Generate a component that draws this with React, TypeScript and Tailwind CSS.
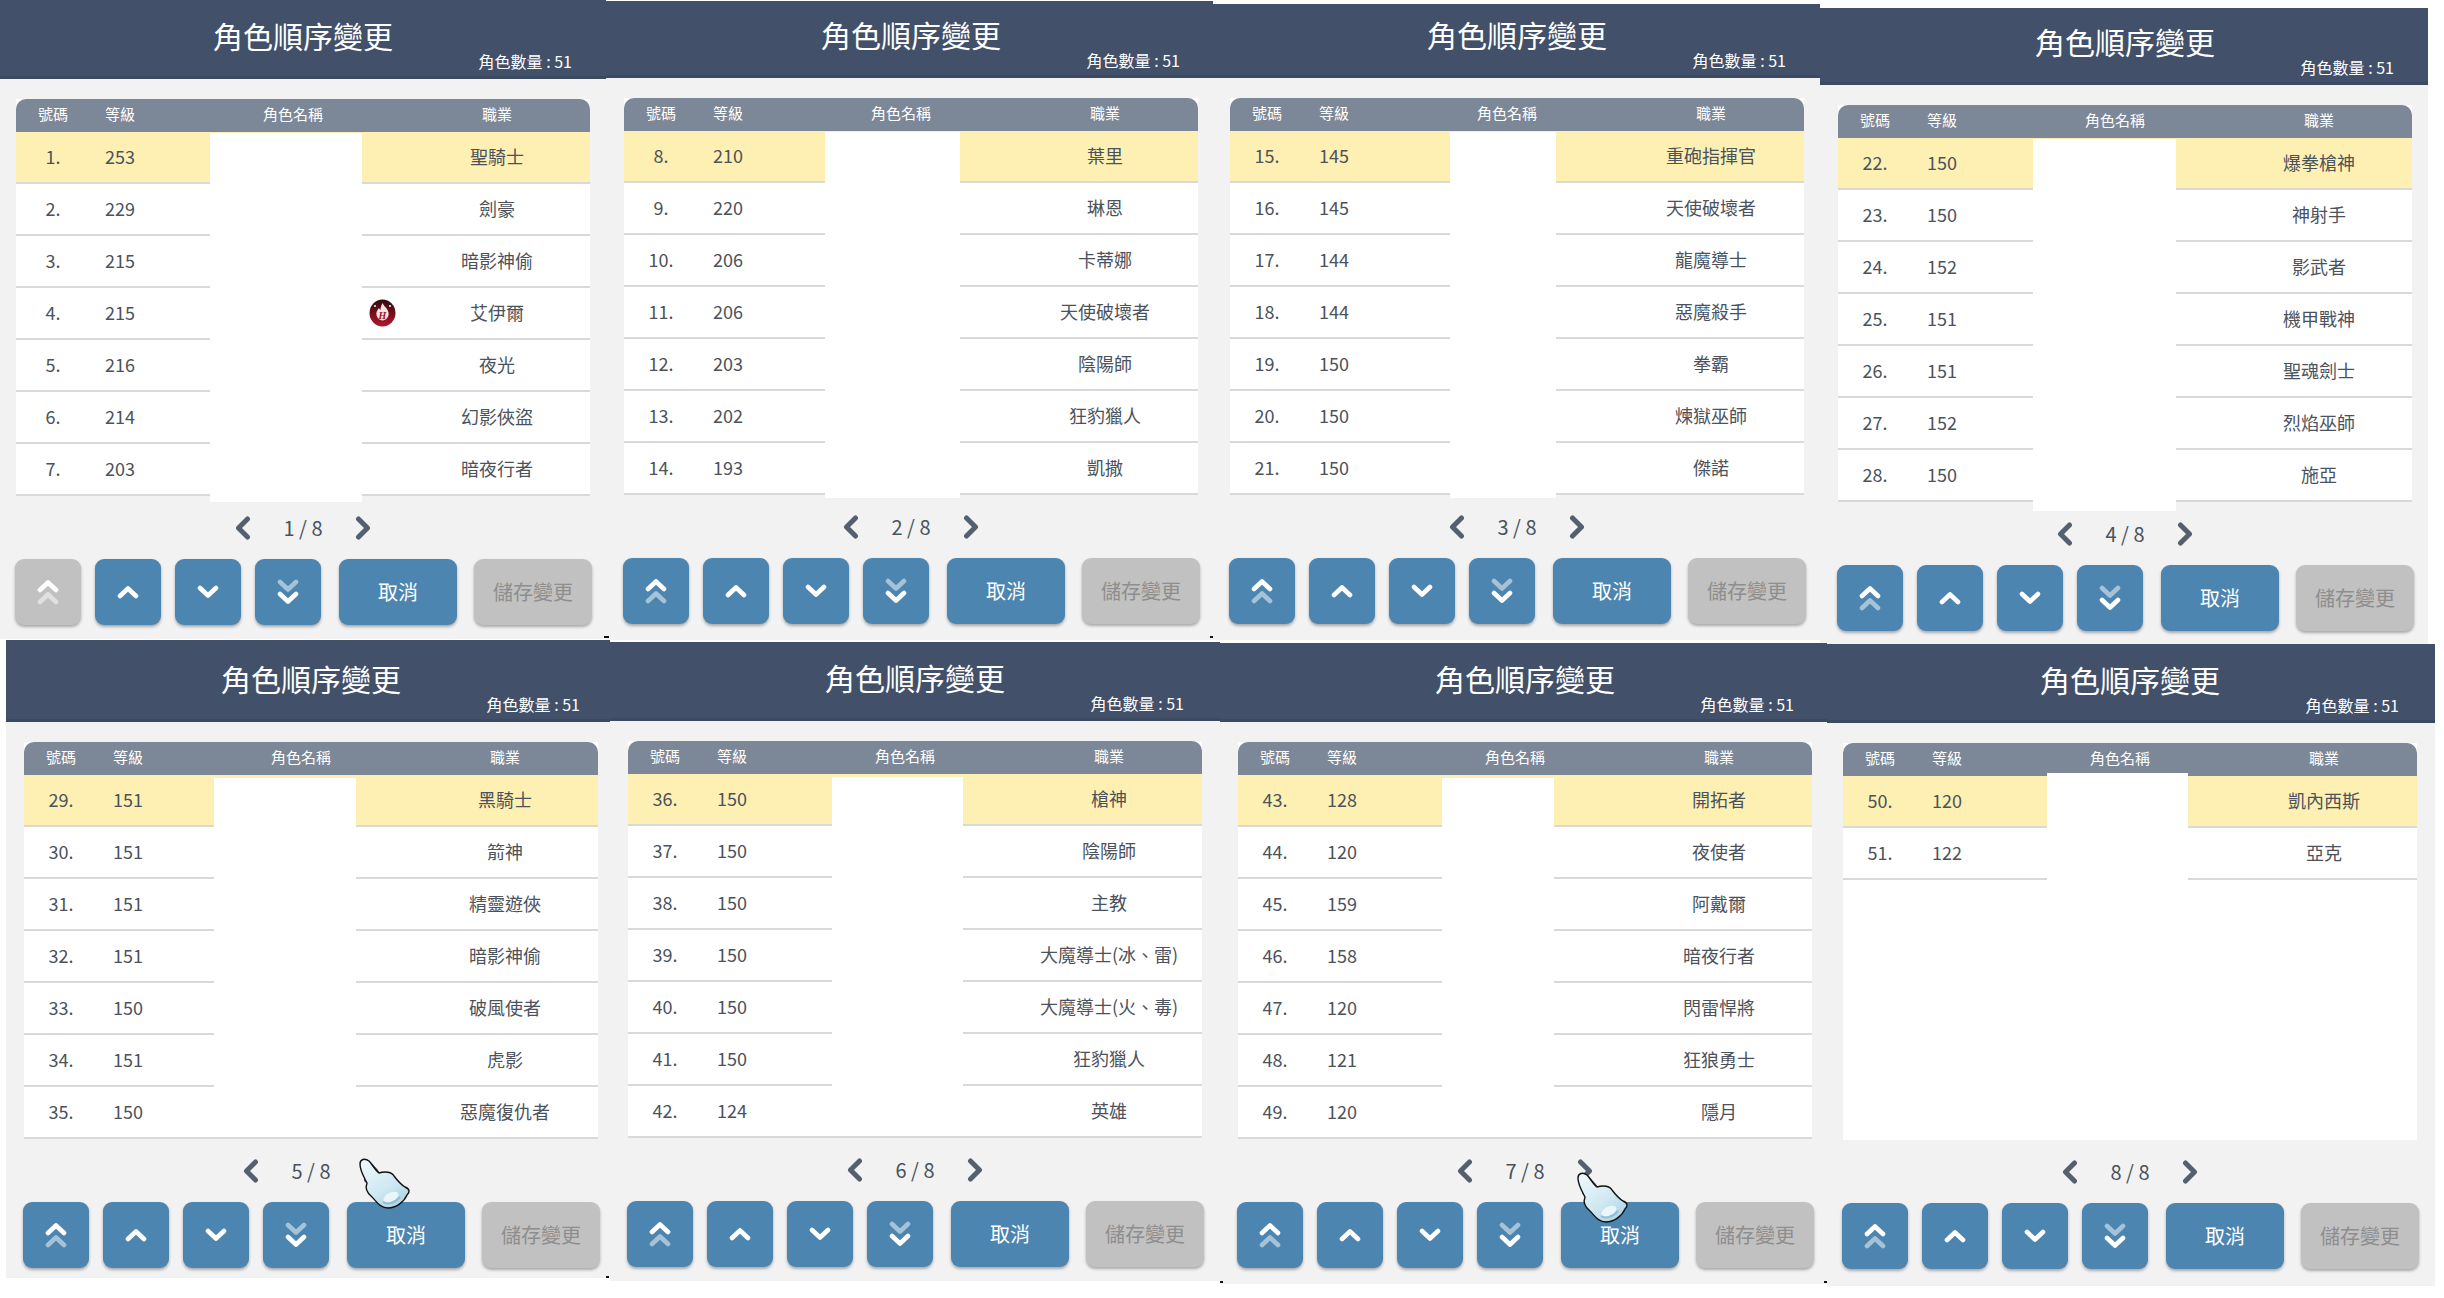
import React from "react";

type P = {
  l: number; t: number; w: number; hh: number; b: number; pad: number;
  nl: number; nw: number; nt: number; nb: number;
  page: number; start: number; rows: [number, string][]; top?: boolean; hand?: [number, number]; specks?: [number, number][];
};

const panels: P[] = [
  { l: 0, t: 0, w: 606, hh: 79, b: 639, pad: 16, nl: 194, nw: 152, nt: 34, nb: 403, page: 1, start: 1, top: true, specks: [[604, 636]],
    rows: [[253, "聖騎士"], [229, "劍豪"], [215, "暗影神偷"], [215, "艾伊爾"], [216, "夜光"], [214, "幻影俠盜"], [203, "暗夜行者"]] },
  { l: 606, t: 1, w: 607, hh: 77, b: 640, pad: 18, nl: 201, nw: 135, nt: 34, nb: 400, page: 2, start: 8, specks: [[0, 635], [604, 635]],
    rows: [[210, "葉里"], [220, "琳恩"], [206, "卡蒂娜"], [206, "天使破壞者"], [203, "陰陽師"], [202, "狂豹獵人"], [193, "凱撒"]] },
  { l: 1213, t: 4, w: 607, hh: 74, b: 640, pad: 17, nl: 220, nw: 106, nt: 34, nb: 400, page: 3, start: 15,
    rows: [[145, "重砲指揮官"], [145, "天使破壞者"], [144, "龍魔導士"], [144, "惡魔殺手"], [150, "拳霸"], [150, "煉獄巫師"], [150, "傑諾"]] },
  { l: 1820, t: 8, w: 608, hh: 77, b: 644, pad: 18, nl: 195, nw: 143, nt: 34, nb: 406, page: 4, start: 22,
    rows: [[150, "爆拳槍神"], [150, "神射手"], [152, "影武者"], [151, "機甲戰神"], [151, "聖魂劍士"], [152, "烈焰巫師"], [150, "施亞"]] },
  { l: 6, t: 640, w: 604, hh: 82, b: 1278, pad: 18, nl: 190, nw: 142, nt: 36, nb: 395, page: 5, start: 29, hand: [344, 510], specks: [[600, 636]],
    rows: [[151, "黑騎士"], [151, "箭神"], [151, "精靈遊俠"], [151, "暗影神偷"], [150, "破風使者"], [151, "虎影"], [150, "惡魔復仇者"]] },
  { l: 610, t: 642, w: 610, hh: 79, b: 1281, pad: 18, nl: 204, nw: 131, nt: 36, nb: 395, page: 6, start: 36,
    rows: [[150, "槍神"], [150, "陰陽師"], [150, "主教"], [150, "大魔導士(冰、雷)"], [150, "大魔導士(火、毒)"], [150, "狂豹獵人"], [124, "英雄"]] },
  { l: 1220, t: 643, w: 607, hh: 79, b: 1284, pad: 18, nl: 204, nw: 112, nt: 36, nb: 395, page: 7, start: 43, hand: [348, 521], specks: [[0, 638], [604, 638]],
    rows: [[128, "開拓者"], [120, "夜使者"], [159, "阿戴爾"], [158, "暗夜行者"], [120, "閃雷悍將"], [121, "狂狼勇士"], [120, "隱月"]] },
  { l: 1827, t: 644, w: 608, hh: 79, b: 1286, pad: 16, nl: 204, nw: 141, nt: 30, nb: 395, page: 8, start: 50,
    rows: [[120, "凱內西斯"], [122, "亞克"]] },
];

function Chev({ dir, opacity = 1 }: { dir: "up" | "down"; opacity?: number }) {
  return (
    <svg width="22" height="14" viewBox="0 0 22 14" fill="none" stroke="white" strokeWidth="4.6" strokeLinecap="round" strokeLinejoin="round" opacity={opacity}>
      <polyline points={dir === "up" ? "3,11 11,3.5 19,11" : "3,3 11,10.5 19,3"} />
    </svg>
  );
}

function IconBtn({ kind, off }: { kind: "top" | "up" | "down" | "bottom"; off?: boolean }) {
  const cls = off ? "bg-[#c1c1c1]" : "bg-[#4c85b0]";
  return (
    <div className={`flex h-[66px] w-[66px] flex-col items-center justify-center rounded-[9px] shadow-[0_2px_3px_rgba(0,0,0,0.3)] ${cls}`}>
      {kind === "top" && (
        <>
          <Chev dir="up" />
          <div className="-mt-[2px]"><Chev dir="up" opacity={0.5} /></div>
        </>
      )}
      {kind === "up" && <Chev dir="up" />}
      {kind === "down" && <Chev dir="down" />}
      {kind === "bottom" && (
        <>
          <Chev dir="down" opacity={0.5} />
          <div className="-mt-[2px]"><Chev dir="down" /></div>
        </>
      )}
    </div>
  );
}

function Arrow({ right }: { right?: boolean }) {
  return (
    <svg width="16" height="24" viewBox="0 0 16 24" fill="none" stroke="#55606f" strokeWidth="5" strokeLinecap="round" strokeLinejoin="round">
      <polyline points={right ? "3.5,3 12.5,12 3.5,21" : "12.5,3 3.5,12 12.5,21"} />
    </svg>
  );
}

function Badge() {
  return (
    <svg width="27" height="28" viewBox="0 0 27 28" className="absolute left-[353px] top-[11px]">
      <defs>
        <linearGradient id="bd" x1="0" y1="0" x2="0" y2="1">
          <stop offset="0" stopColor="#2c0a10" />
          <stop offset="0.55" stopColor="#7a0f1c" />
          <stop offset="1" stopColor="#b3182a" />
        </linearGradient>
      </defs>
      <ellipse cx="13.5" cy="14" rx="13" ry="13.5" fill="url(#bd)" />
      <path d="M13.5 4c1 3 5 5 6 9.5 .8 4-2.4 8-6 8s-6.8-4-6-8c.4-2 1.6-3 2.4-4.5 .5 1 1 1.5 1.6 1.8C11.6 8 12.6 6 13.5 4z" fill="#f6e3e3" />
      <circle cx="6" cy="7" r="1.1" fill="#f6e3e3" />
      <circle cx="21" cy="7" r="1.1" fill="#f6e3e3" />
      <text x="13.5" y="20" textAnchor="middle" fontSize="10" fontWeight="700" fontStyle="italic" fontFamily="'Liberation Serif', serif" fill="#a01223">H</text>
    </svg>
  );
}

function Hand({ x, y, id }: { x: number; y: number; id: string }) {
  return (
    <svg width="70" height="70" viewBox="0 0 70 70" className="absolute" style={{ left: x, top: y }}>
      <defs>
        <linearGradient id={id} x1="0.1" y1="0" x2="0.8" y2="1">
          <stop offset="0" stopColor="#eef8fb" />
          <stop offset="0.6" stopColor="#cfe8f2" />
          <stop offset="1" stopColor="#a9d3e4" />
        </linearGradient>
      </defs>
      <path d="M19 11C23 14 27 19 30 23L27 33 14 30z" fill="#4c5663" />
      <path d="M10 14C10 9 15 8 19 11C22 14 25 20 29 23C35 21 42 22 44 26C47 30 50 34 55 37C60 39 60 42 57 45C54 52 46 58 38 58C30 58 27 52 22 47C17 43 15 38 17 33C14 27 10 21 10 14Z" fill={`url(#${id})`} stroke="#111" strokeWidth="1.4" />
      <ellipse cx="41" cy="47" rx="8" ry="4.5" transform="rotate(-25 41 47)" fill="#eaf6fa" />
      <path d="M33 52C37 55 45 53 50 47" fill="none" stroke="#8fc0d4" strokeWidth="2" />
    </svg>
  );
}

function Panel({ p }: { p: P }) {
  const font = "[font-family:'Noto_Sans_CJK_TC','Noto_Sans',sans-serif]";
  return (
    <section
      className={`absolute flex flex-col overflow-hidden bg-[#f2f2f2] ${font}`}
      style={{ left: p.l, top: p.t, width: p.w, height: p.b - p.t }}
    >
      <header
        className="flex shrink-0 flex-col items-start justify-end border-b-[3px] border-[#3c4a60] bg-[#425069] pb-[5px] text-white"
        style={{ height: p.hh, paddingLeft: p.pad, width: p.w }}
      >
        <div className="w-[574px] text-center text-[30px] leading-[36px] -mb-[2px]">角色順序變更</div>
        <div className="w-[556px] text-right text-[16px] leading-[20px]">角色數量 : 51</div>
      </header>

      <div className="relative mt-[20px] w-[574px] bg-white" style={{ marginLeft: p.pad }}>
        <div className="grid h-[33px] grid-cols-[74px_60px_254px_1fr] items-center rounded-t-[10px] bg-[#7c8897] pb-[2px] text-center text-[15px] text-white">
          <div>號碼</div>
          <div>等級</div>
          <div className="pl-[32px]">角色名稱</div>
          <div>職業</div>
        </div>
        <div className="h-[364px]">
          {p.rows.map(([lv, job], i) => (
            <div
              key={i}
              className={`relative grid h-[52px] grid-cols-[74px_60px_254px_1fr] items-center border-b-2 border-[#d9d9d9] pb-[2px] text-center text-[18px] text-[#4b525c] ${i === 0 ? "bg-[#fef0b3]" : "bg-white"}`}
            >
              <div>{p.start + i}.</div>
              <div>{lv}</div>
              <div />
              <div>{job}</div>
              {job === "艾伊爾" && <Badge />}
            </div>
          ))}
        </div>
        <div
          className="absolute bg-white"
          style={{ left: p.nl, width: p.nw, top: p.nt, height: p.nb - p.nt }}
        />
      </div>

      <nav className="flex h-[63px] w-[574px] shrink-0 items-center justify-center text-[20px] text-[#4b525c]" style={{ marginLeft: p.pad }}>
        <Arrow />
        <span className="w-[104px] text-center">{p.page} / 8</span>
        <Arrow right />
      </nav>

      <div className="flex items-start" style={{ marginLeft: p.pad - 1 }}>
        <div className="flex gap-[14px]">
          <IconBtn kind="top" off={p.top} />
          <IconBtn kind="up" />
          <IconBtn kind="down" />
          <IconBtn kind="bottom" />
        </div>
        <button className="ml-[18px] h-[66px] w-[118px] rounded-[9px] bg-[#4c85b0] text-[20px] text-white shadow-[0_2px_3px_rgba(0,0,0,0.3)]">取消</button>
        <button className="ml-[17px] h-[66px] w-[118px] rounded-[9px] bg-[#c1c1c1] text-[20px] text-[#8e8e8e] shadow-[0_2px_3px_rgba(0,0,0,0.3)]">儲存變更</button>
      </div>

      {p.hand && <Hand x={p.hand[0]} y={p.hand[1]} id={`hand${p.page}`} />}
      {p.specks?.map(([x, y], i) => (
        <span key={i} className="absolute h-[2px] w-[3px] bg-[#111]" style={{ left: x, top: y }} />
      ))}
    </section>
  );
}

export default function App() {
  return (
    <main className="relative h-[1298px] w-[2444px] overflow-hidden bg-white">
      {panels.map((p) => (
        <Panel key={p.page} p={p} />
      ))}
    </main>
  );
}
